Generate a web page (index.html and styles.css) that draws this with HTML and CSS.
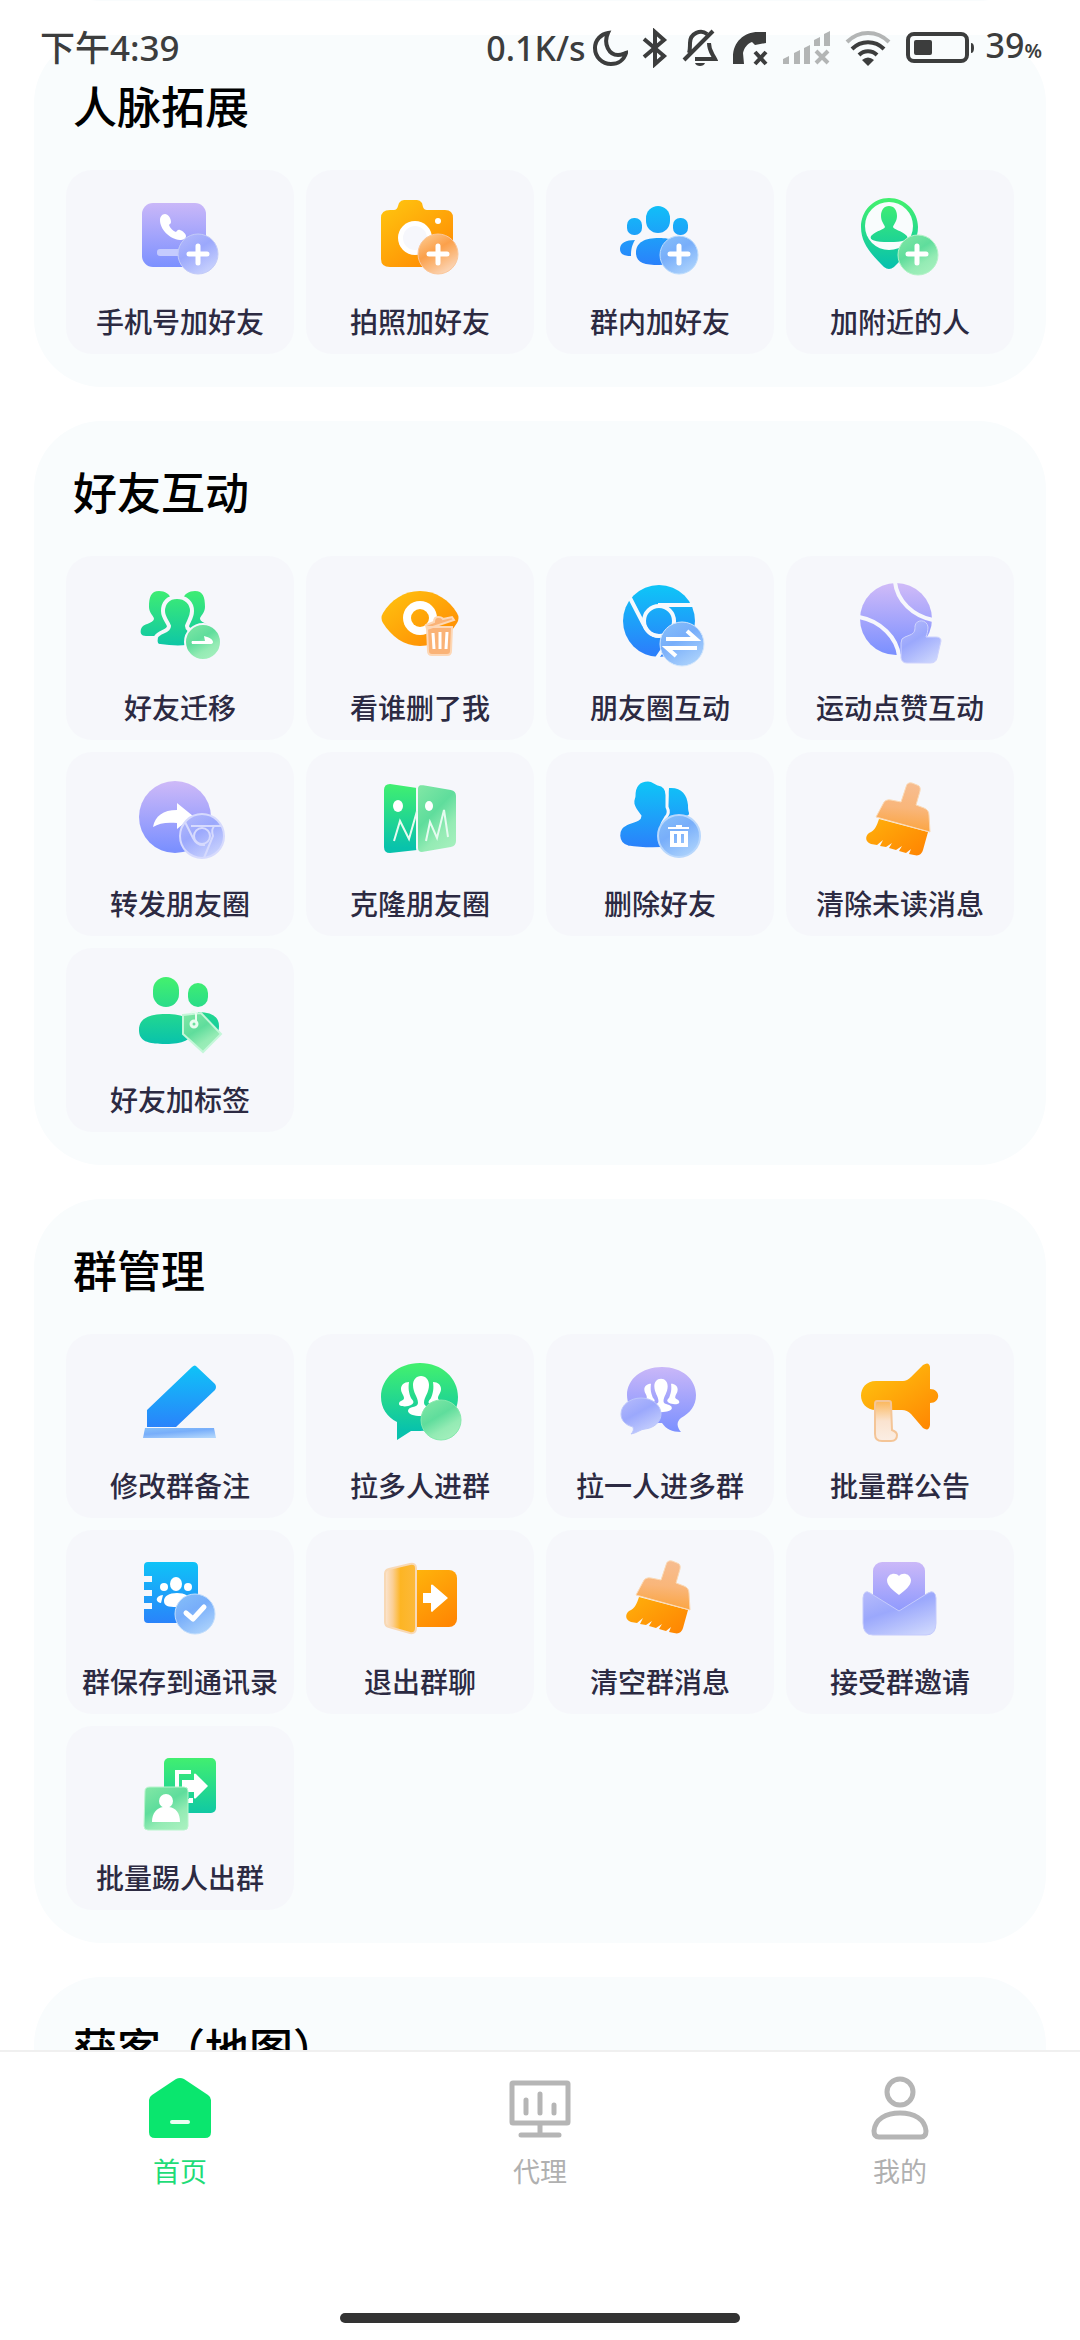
FILE: index.html
```
<!DOCTYPE html>
<html lang="zh-CN">

<head>
    <meta charset="UTF-8">
    <meta name="viewport" content="width=device-width,initial-scale=1.0">
    <title>首页</title>
    <link rel="stylesheet" href="styles.css">
</head>

<body>
    <!-- 公用渐变和图形 -->
    <svg class="defs" width="0" height="0" aria-hidden="true">
        <defs>
            <linearGradient id="purple" gradientUnits="userSpaceOnUse" x1="48" y1="12" x2="48" y2="80">
                <stop offset="0" stop-color="#cdb9f8" />
                <stop offset="1" stop-color="#7b90ff" />
            </linearGradient>
            <linearGradient id="orange" gradientUnits="userSpaceOnUse" x1="20" y1="12" x2="72" y2="84">
                <stop offset="0" stop-color="#ffc30f" />
                <stop offset="1" stop-color="#ff8502" />
            </linearGradient>
            <linearGradient id="blue" gradientUnits="userSpaceOnUse" x1="48" y1="14" x2="48" y2="78">
                <stop offset="0" stop-color="#0fc3f7" />
                <stop offset="1" stop-color="#2b80fb" />
            </linearGradient>
            <linearGradient id="green" gradientUnits="userSpaceOnUse" x1="48" y1="14" x2="48" y2="78">
                <stop offset="0" stop-color="#41ef70" />
                <stop offset="1" stop-color="#08c2ac" />
            </linearGradient>
            <linearGradient id="glassPurple" x1="0.2" y1="0" x2="0.8" y2="1">
                <stop offset="0" stop-color="#b2b8fb" />
                <stop offset="0.4" stop-color="#9ba8fc" />
                <stop offset="1" stop-color="#cdd6fd" />
            </linearGradient>
            <linearGradient id="glassOrange" x1="0.2" y1="0" x2="0.8" y2="1">
                <stop offset="0" stop-color="#fdc88c" />
                <stop offset="0.4" stop-color="#fba04a" />
                <stop offset="1" stop-color="#fbdcc4" />
            </linearGradient>
            <linearGradient id="glassBlue" x1="0.2" y1="0" x2="0.8" y2="1">
                <stop offset="0" stop-color="#84bdf9" />
                <stop offset="0.4" stop-color="#78aefa" />
                <stop offset="1" stop-color="#b0d5fc" />
            </linearGradient>
            <linearGradient id="glassGreen" x1="0.2" y1="0" x2="0.8" y2="1">
                <stop offset="0" stop-color="#7de6a4" />
                <stop offset="0.4" stop-color="#5fdd9c" />
                <stop offset="0.7" stop-color="#94ebb4" />
                <stop offset="1" stop-color="#a6f0be" />
            </linearGradient>
            <linearGradient id="brushHead" x1="0.5" y1="0" x2="0.4" y2="1">
                <stop offset="0" stop-color="#f7bd90" />
                <stop offset="0.5" stop-color="#f9b67a" />
                <stop offset="1" stop-color="#fba33c" />
            </linearGradient>
            <linearGradient id="handle" x1="0" y1="0" x2="0" y2="1">
                <stop offset="0" stop-color="#fbb75a" />
                <stop offset="0.5" stop-color="#fae3cf" />
                <stop offset="1" stop-color="#fbeee4" />
            </linearGradient>
            <linearGradient id="door" x1="0" y1="0" x2="1" y2="0">
                <stop offset="0" stop-color="#fbe6d3" />
                <stop offset="0.25" stop-color="#fbcf94" />
                <stop offset="0.5" stop-color="#fdb524" />
                <stop offset="1" stop-color="#fcb93b" />
            </linearGradient>
        </defs>
        <symbol id="brush" viewBox="0 0 96 96">
            <path fill="url(#orange)" d="M27 49L76 62L71 80Q69 87 62 85L57 84L59 79L54 83L47 81L50 76L44 80L37 78L40 73L34 77L28 76L31 70L25 75L19 74C13 72 13 66 17 63C23 61 25 55 27 49Z" />
            <path fill="url(#brushHead)" stroke="#fbd9b4" d="M54 17Q55 12 60 13L65 15Q69 16 68 21L64 35L72 38Q77 40 77 45L78 62L24 47L31 34Q33 29 39 30L49 32Z" />
        </symbol>
        <symbol id="crowd" viewBox="0 0 48 42">
            <path d="M12 7C7 7 4 10 4 14c0 4 3 6 3 9 0 3-5 2-5 6 0 3 9 3 12 1 5-3 1-5 0-7-2-5-3-9-2-16zM36 7c5 0 8 3 8 7 0 4-3 6-3 9 0 3 5 2 5 6 0 3-9 3-12 1-5-3-1-5 0-7 2-5 3-9 2-16z" />
            <path d="M24 1c5 0 8 4 8 9 0 8-5 12-5 18 0 5 10 3 10 8 0 3-6 5-13 5s-13-2-13-5c0-5 10-3 10-8 0-6-5-10-5-18 0-5 3-9 8-9z" />
        </symbol>
    </svg>

    <!-- 状态栏 -->
    <header class="status-bar">
        <span class="time">下午4:39</span>
        <div class="status-right">
            <span>0.1K/s</span>
            <svg class="moon" width="36" height="38" viewBox="0 0 36 38" aria-hidden="true">
                <path d="M16 4C9 5 3 11 3 19c0 9 7 16 16 16 7 0 13-4 15-11-3 1-5 2-8 2-9 0-15-11-10-22z" />
            </svg>
            <svg width="26" height="40" viewBox="0 0 26 40" aria-hidden="true">
                <path d="M2 11l20 17-9 8V4l9 8L2 29" />
            </svg>
            <svg width="36" height="40" viewBox="0 0 36 40" aria-hidden="true">
                <path d="M2 32L31 3M7 25c1-3 1-6 1-10C8 5 19 1 25 6M27 15c0 8 3 10 6 16H13" />
                <path class="solid" d="M13 35h10c-1 4-9 4-10 0z" />
            </svg>
            <svg width="36" height="36" viewBox="0 0 36 36" aria-hidden="true">
                <path class="solid" d="M1 34V27C1 12 12 2 26 2H34V13L23 15 20 12C15 14 12 18 11 23L12 34Z" />
                <path d="M23 22l11 12M34 22L23 34" />
            </svg>
            <svg width="48" height="36" viewBox="0 0 48 36" aria-hidden="true">
                <path class="faint" d="M1 29l6-3v8H1zM12 23l6-3v14h-6zM22 18l6-3v19h-6zM32 10l6-3v9h-6zM42 4l6-3v15h-6z" />
                <path class="faint-line" d="M34 21l12 12M46 21L34 33" />
            </svg>
            <svg width="48" height="38" viewBox="0 0 48 38" aria-hidden="true">
                <path class="faint-line" d="M3 13C15 1 33 1 45 13" />
                <path d="M8 20c9-9 23-9 32 0M15 26c5-5 13-5 18 0" />
                <path class="solid" d="M18 31q6-5 12 0l-6 6z" />
            </svg>
            <svg class="battery" width="70" height="32" viewBox="0 0 70 32" aria-hidden="true">
                <rect x="2" y="2" width="59" height="27" rx="6" />
                <path class="solid" d="M8 10q0-2 2-2h14q2 0 2 2v11q0 2-2 2H10q-2 0-2-2zM65 11q3 0 3 5t-3 5z" />
            </svg>
            <span>39<small>%</small></span>
        </div>
    </header>

    <main class="content">
        <section class="card card-above"></section>

        <section class="card">
            <h2>人脉拓展</h2>
            <div class="grid">
                <button class="cell">
                    <svg viewBox="0 0 96 96" aria-hidden="true">
                        <rect x="10" y="15" width="64" height="64" rx="11" fill="url(#purple)" />
                        <path fill="#fff" d="M33 26c3 0 6 4 6 8 0 2-2 2-2 3 1 3 4 6 7 7 1-1 2-3 4-2 3 1 6 4 6 6 0 3-3 4-6 4C37 51 28 41 28 32c0-3 2-6 5-6z" />
                        <rect x="25" y="61" width="34" height="7" rx="3" fill="#c5cbfe" />
                        <circle cx="66" cy="66" r="20" fill="url(#glassPurple)" stroke="#c3cbf8" />
                        <path class="plus" d="M66 58v17M57 66h18" />
                    </svg>
                    <span>手机号加好友</span>
                </button>
                <button class="cell">
                    <svg viewBox="0 0 96 96" aria-hidden="true">
                        <path fill="url(#orange)" d="M18 22h4q3 0 4-4l1-3q2-3 5-3h13q3 0 5 3l1 4q1 3 4 3h18q8 0 8 8v41q0 8-8 8H18q-9 0-9-8V30q0-8 9-8z" />
                        <circle cx="43" cy="50" r="17" fill="#fff" />
                        <circle cx="43" cy="50" r="12" fill="#f6f7fc" />
                        <circle cx="66" cy="33" r="3" fill="#fff" />
                        <circle cx="66" cy="66" r="20" fill="url(#glassOrange)" stroke="#fbc79a" />
                        <path class="plus" d="M66 58v17M57 66h18" />
                    </svg>
                    <span>拍照加好友</span>
                </button>
                <button class="cell">
                    <svg viewBox="0 0 96 96" aria-hidden="true">
                        <g fill="url(#blue)">
                            <rect x="34" y="18" width="24" height="27" rx="12" />
                            <rect x="15" y="30" width="15" height="17" rx="7" />
                            <rect x="61" y="30" width="15" height="17" rx="7" />
                            <path d="M23 52C14 52 8 55 8 61c0 5 4 7 11 7 0-7 1-11 4-16zM47 50c12 0 22 3 22 13s-10 14-22 14c-14 0-23-2-23-12 0-11 9-15 23-15z" />
                        </g>
                        <circle cx="67" cy="67" r="19" fill="url(#glassBlue)" stroke="#bcdcfd" />
                        <path class="plus" d="M67 58v17M58 66h18" />
                    </svg>
                    <span>群内加好友</span>
                </button>
                <button class="cell">
                    <svg viewBox="0 0 96 96" aria-hidden="true">
                        <path fill="url(#green)" d="M37 10C53 10 66 23 66 39C66 56 54 67 42 79Q37 83 32 79C20 67 9 56 9 39C9 23 21 10 37 10Z" />
                        <circle cx="37" cy="38" r="24" fill="#f9fcfd" />
                        <path fill="url(#green)" d="M37 18c5 0 8 4 8 10 0 5-3 8-4 11 1 3 8 3 14 9q3 6-18 6t-18-6c6-6 13-6 14-9-1-3-4-6-4-11 0-6 3-10 8-10z" />
                        <circle cx="66" cy="67" r="20" fill="url(#glassGreen)" stroke="#b4f3c8" />
                        <path class="plus" d="M65 58v17M56 66h18" />
                    </svg>
                    <span>加附近的人</span>
                </button>
            </div>
        </section>

        <section class="card">
            <h2>好友互动</h2>
            <div class="grid">
                <button class="cell">
                    <svg viewBox="0 0 96 96" aria-hidden="true">
                        <path fill="url(#green)" d="M27 17c6 0 11 3 12 8v37H14c-5 0-6-3-5-7 2-6 12-5 13-10 0-3-5-6-5-12 0-10 2-16 10-16zM63 17c-6 0-11 3-12 8v37h25c5 0 6-3 5-7-2-6-12-5-13-10 0-3 5-6 5-12 0-10-2-16-10-16z" />
                        <path fill="url(#green)" stroke="#f6f7fc" stroke-width="4" d="M45 23c9 0 15 6 15 14 0 7-4 11-5 15 0 6 11 5 14 11 2 6-1 9-5 9-12 2-24 2-36 0-4 0-5-4-4-9 3-6 13-5 13-11-1-4-6-8-6-15 0-8 5-14 14-14z" />
                        <circle cx="71" cy="68" r="18" fill="url(#glassGreen)" stroke="#f6f7fc" stroke-width="2" />
                        <path fill="#fff" d="M60 67h13l-1-5c4 1 9 3 9 6q0 2-3 2H60q-1-2 0-3z" />
                    </svg>
                    <span>好友迁移</span>
                </button>
                <button class="cell">
                    <svg viewBox="0 0 96 96" aria-hidden="true">
                        <path fill="url(#orange)" d="M11 39C19 26 32 17 48 17s29 9 37 22q3 5 0 10C77 62 64 72 48 72S19 62 11 49q-3-5 0-10z" />
                        <circle cx="48" cy="44" r="17" fill="#fff" />
                        <circle cx="48" cy="44" r="9" fill="url(#orange)" />
                        <path fill="#fab377" stroke="#fdd7b5" stroke-width="2" d="M55 53h25l-1 24q0 4-4 4H60q-4 0-4-4zM54 51l8-3q0-5 4-5t5 2l9-2 2 3-27 9z" />
                        <path stroke="#fff" stroke-width="3" d="M61 59l1 16M68 58v17M75 58l-1 17" />
                    </svg>
                    <span>看谁删了我</span>
                </button>
                <button class="cell">
                    <svg viewBox="0 0 96 96" aria-hidden="true">
                        <circle cx="47" cy="47" r="36" fill="url(#blue)" />
                        <g fill="none" stroke="#f6f9fd" stroke-width="4">
                            <circle cx="47" cy="47" r="15" />
                            <path d="M82 31H46M18 24l14 27q5 11 15 11M62 46v13L45 84" />
                        </g>
                        <circle cx="70" cy="70" r="22" fill="url(#glassBlue)" stroke="#d2e6fc" />
                        <path fill="none" stroke="#fff" stroke-width="4" d="M54 65h30l-9-8M85 74H55l9 8" />
                    </svg>
                    <span>朋友圈互动</span>
                </button>
                <button class="cell">
                    <svg viewBox="0 0 96 96" aria-hidden="true">
                        <circle cx="44" cy="45" r="36" fill="url(#purple)" />
                        <path fill="none" stroke="#f6f7fc" stroke-width="4" d="M43 8C45 27 61 42 81 46M7 43C29 47 45 64 47 82" />
                        <path fill="url(#glassPurple)" stroke="#cfd3fd" d="M49 69q0-5 4-6l5-2c5-2 5-5 5-9 1-7 12-7 13 1 0 4-1 7-2 10h10q5 0 5 4l-4 17q-1 5-7 5H55q-5 0-6-5z" />
                    </svg>
                    <span>运动点赞互动</span>
                </button>
                <button class="cell">
                    <svg viewBox="0 0 96 96" aria-hidden="true">
                        <circle cx="43" cy="47" r="36" fill="url(#purple)" />
                        <path fill="#fff" d="M21 57C23 46 31 40 45 40V33L61 46L45 59V53C35 52 27 53 21 57Z" />
                        <circle cx="70" cy="66" r="22" fill="url(#glassPurple)" stroke="#d6dafd" stroke-width="2" />
                        <g fill="none" stroke="#d6dafd" stroke-width="2">
                            <circle cx="70" cy="66" r="8" />
                            <path d="M53 52l8 16q4 8 12 7M59 56h30M82 57q-3 2-1 9l-9 22" />
                        </g>
                    </svg>
                    <span>转发朋友圈</span>
                </button>
                <button class="cell">
                    <svg viewBox="0 0 96 96" aria-hidden="true">
                        <path fill="url(#green)" d="M18 14l27 4v62l-27 3q-6 0-6-6V20q0-6 6-6z" />
                        <path fill="url(#glassGreen)" stroke="#f6f7fc" stroke-width="2" d="M50 14l29 5q6 1 6 7v45q0 6-6 7l-29 5q-5 0-5-5V19q0-5 5-5z" />
                        <ellipse cx="26" cy="36" rx="5" ry="6" fill="#fff" />
                        <ellipse cx="57" cy="36" rx="4" ry="5" fill="#fff" />
                        <path fill="none" stroke="#e6fbf0" stroke-width="2" d="M22 71l6-20 9 18 8-28M54 71l4-19 7 16 7-28 4 27" />
                    </svg>
                    <span>克隆朋友圈</span>
                </button>
                <button class="cell">
                    <svg viewBox="0 0 96 96" aria-hidden="true">
                        <g fill="url(#blue)">
                            <path d="M57 18c12-1 18 6 19 17 0 3 0 5 1 8 1 4-8 3-12 5-3 2-5 4-10 4z" />
                            <path stroke="#f6f7fc" stroke-width="3" d="M36 10c5 0 7 3 10 4 6 1 9 5 9 11v12c2 4 2 7-1 10-2 4-5 7-4 9l10 5v17q-26 2-44-1C4 74 4 58 14 54c5-3 14-3 14-8-2-3-6-7-7-12-1-4 1-6 1-8 0-10 4-16 14-16z" />
                        </g>
                        <circle cx="67" cy="66" r="21" fill="url(#glassBlue)" stroke="#b8d7fc" stroke-width="2" />
                        <path fill="#fff" fill-rule="evenodd" d="M56 57h8v-2h6v2h7v2H56zM58 61h18v16H58zM62 64v9h3v-9zM69 64v9h3v-9z" />
                    </svg>
                    <span>删除好友</span>
                </button>
                <button class="cell">
                    <svg viewBox="0 0 96 96" aria-hidden="true">
                        <use href="#brush" />
                    </svg>
                    <span>清除未读消息</span>
                </button>
                <button class="cell">
                    <svg viewBox="0 0 96 96" aria-hidden="true">
                        <g fill="url(#green)">
                            <rect x="21" y="11" width="26" height="30" rx="13" />
                            <rect x="56" y="17" width="20" height="24" rx="10" />
                            <path d="M66 46q21 0 21 14c0 8-3 11-15 10zM34 48c16 0 27 4 27 15S50 78 34 78C15 78 7 75 7 64s9-16 27-16z" />
                        </g>
                        <path fill="url(#glassGreen)" stroke="#c4f7d9" stroke-width="2" d="M51 49l18-2 20 21-18 18-20-18z" />
                        <circle cx="62" cy="58" r="3" fill="none" stroke="#e8fdf0" stroke-width="3" />
                        <path fill="none" stroke="#e8fdf0" stroke-width="2" d="M64 56v-8q-2-5-5-1" />
                    </svg>
                    <span>好友加标签</span>
                </button>
            </div>
        </section>

        <section class="card">
            <h2>群管理</h2>
            <div class="grid">
                <button class="cell">
                    <svg viewBox="0 0 96 96" aria-hidden="true">
                        <path fill="url(#blue)" d="M60 15q3-3 5 0l18 17q2 3 0 6L44 75H15V58z" />
                        <path fill="url(#glassBlue)" d="M13 76h69l2 10H11z" />
                    </svg>
                    <span>修改群备注</span>
                </button>
                <button class="cell">
                    <svg viewBox="0 0 96 96" aria-hidden="true">
                        <path fill="url(#green)" d="M48 11c22 0 38 15 38 34S70 79 48 79h-9L25 88V70C15 65 9 56 9 45 9 26 26 11 48 11z" />
                        <use href="#crowd" x="25" y="23" width="48" height="42" fill="#fff" />
                        <circle cx="69" cy="68" r="20" fill="url(#glassGreen)" stroke="#86e9ad" />
                    </svg>
                    <span>拉多人进群</span>
                </button>
                <button class="cell">
                    <svg viewBox="0 0 96 96" aria-hidden="true">
                        <path fill="url(#purple)" d="M50 15c20 0 34 12 34 28 0 11-6 18-15 23-5 4-4 9 0 14-9 0-15-3-19-9-20 1-35-12-35-28s15-28 35-28z" />
                        <use href="#crowd" x="29" y="26" width="40" height="35" fill="#fff" />
                        <path fill="url(#glassPurple)" stroke="#bcc7fb" d="M29 46c11 0 20 7 20 16 0 8-7 14-16 15-4 0-8 4-14 5 2-2 3-4 2-7C13 73 9 68 9 62c0-9 9-16 20-16z" />
                    </svg>
                    <span>拉一人进多群</span>
                </button>
                <button class="cell">
                    <svg viewBox="0 0 96 96" aria-hidden="true">
                        <path fill="url(#orange)" d="M24 29h27q4 0 8-4l12-12q6-4 7 2v22c11 0 11 14 0 14v22q-1 7-7 3L59 62q-4-4-9-4H24C4 58 4 29 24 29z" />
                        <path fill="url(#handle)" stroke="#f4c597" stroke-width="2" d="M25 49h12q2 0 2 2l1 27q5 2 5 5 0 6-6 6H30q-7 0-7-7V52q0-3 2-3z" />
                    </svg>
                    <span>批量群公告</span>
                </button>
                <button class="cell">
                    <svg viewBox="0 0 96 96" aria-hidden="true">
                        <path fill="url(#blue)" d="M16 14h45q5 0 5 5v56H16q-4 0-4-4V61h8v-6h-8v-7h8v-6h-8v-8h8v-6h-8V18q0-4 4-4z" />
                        <g fill="#fff">
                            <ellipse cx="44" cy="36" rx="6" ry="7" />
                            <circle cx="32" cy="39" r="4" />
                            <circle cx="56" cy="39" r="4" />
                            <path d="M31 47c-8 1-8 7-2 8zM45 45c8 0 13 3 13 8s-4 6-13 6-13-1-13-6 5-8 13-8z" />
                        </g>
                        <circle cx="63" cy="66" r="20" fill="url(#glassBlue)" stroke="#c3defc" />
                        <path fill="none" stroke="#fff" stroke-width="5" stroke-linecap="round" stroke-linejoin="round" d="M54 65l7 6 11-12" />
                    </svg>
                    <span>群保存到通讯录</span>
                </button>
                <button class="cell">
                    <svg viewBox="0 0 96 96" aria-hidden="true">
                        <rect x="36" y="22" width="49" height="57" rx="8" fill="url(#orange)" />
                        <path fill="url(#door)" stroke="#f8d9b6" stroke-width="2" d="M17 21l21-5q6-1 6 4v60q0 6-6 5l-21-6q-4-1-4-5V26q0-4 4-5z" />
                        <path fill="#fff" d="M51 45h8v-8q1-1 2 0l15 13-15 13q-1 2-2 0v-8h-8z" />
                    </svg>
                    <span>退出群聊</span>
                </button>
                <button class="cell">
                    <svg viewBox="0 0 96 96" aria-hidden="true">
                        <use href="#brush" />
                    </svg>
                    <span>清空群消息</span>
                </button>
                <button class="cell">
                    <svg viewBox="0 0 96 96" aria-hidden="true">
                        <rect x="21" y="14" width="52" height="60" rx="9" fill="url(#purple)" />
                        <path fill="#fff" d="M47 28c3-4 11-3 12 4 0 6-6 10-12 15-6-5-12-9-12-15 1-7 9-8 12-4z" />
                        <path fill="url(#glassPurple)" stroke="#c5cbfc" d="M18 45l29 18 29-18q7-4 8 5v25q0 12-10 12H21q-10 0-10-12V50q1-9 7-5z" />
                    </svg>
                    <span>接受群邀请</span>
                </button>
                <button class="cell">
                    <svg viewBox="0 0 96 96" aria-hidden="true">
                        <rect x="32" y="14" width="52" height="55" rx="5" fill="url(#green)" />
                        <path fill="none" stroke="#fff" stroke-width="4" d="M59 28H45v20M59 54v3h-8" />
                        <path fill="#fff" d="M50 36h12v-6q1-1 2 0l12 12-12 12q-1 1-2 0v-6H50z" />
                        <path fill="url(#glassGreen)" stroke="#b8f5cd" d="M18 43h34q4 0 4 4v35q0 4-4 4H16q-4 0-4-4l1-35q0-4 5-4z" />
                        <circle cx="34" cy="57" r="7" fill="#fff" />
                        <path fill="#fff" d="M20 78c0-9 5-14 11-15v-4h6v4c7 1 11 6 11 15z" />
                    </svg>
                    <span>批量踢人出群</span>
                </button>
            </div>
        </section>

        <section class="card">
            <h2>获客（地图）</h2>
            <div class="grid"></div>
        </section>
    </main>

    <!-- 底部导航 -->
    <footer class="footer">
        <nav class="tabs">
            <a class="tab active" href="#">
                <svg viewBox="0 0 64 64" aria-hidden="true">
                    <path fill="#0ae66e" d="M28 3q4-2 8 0l24 16q3 2 3 5v32q0 6-6 6H7q-6 0-6-6V24q0-3 3-5z" />
                    <path stroke="#e8fff1" stroke-width="4" stroke-linecap="round" d="M24 46h16" />
                </svg>
                <span>首页</span>
            </a>
            <a class="tab" href="#">
                <svg viewBox="0 0 64 64" aria-hidden="true">
                    <path d="M5 7h54q1 0 1 1v38q0 1-1 1H5q-1 0-1-1V8q0-1 1-1zM32 47v11" />
                    <path stroke-linecap="round" d="M13 59h38M18 24v13M32 18v19M46 29v8" />
                </svg>
                <span>代理</span>
            </a>
            <a class="tab" href="#">
                <svg viewBox="0 0 64 64" aria-hidden="true">
                    <circle cx="32" cy="16" r="13" />
                    <path d="M11 61q-5 0-5-6c1-12 12-18 26-18s25 6 26 18q0 6-5 6z" />
                </svg>
                <span>我的</span>
            </a>
        </nav>
        <div class="home-bar"></div>
    </footer>
</body>

</html>
```
FILE: styles.css
```
* {
    margin: 0;
    padding: 0;
    box-sizing: border-box;
}

html,
body {
    height: 100%;
    font-family: "Noto Sans", "Noto Sans CJK SC", sans-serif;
    background-color: #fff;
}

/* 内容区在上，导航固定在底部 */
body {
    display: flex;
    flex-direction: column;
    overflow: hidden;
}

.defs {
    position: absolute;
}

/* 状态栏浮在内容上方 */
.status-bar {
    position: absolute;
    top: 0;
    left: 0;
    right: 0;
    z-index: 1;
    display: flex;
    justify-content: space-between;
    align-items: center;
    height: 96px;
    padding: 0 38px 0 40px;
    color: #3c3d3d;
    font-size: 34px;
    font-weight: 500;
    line-height: 48px;
}

.time {
    font-size: 35px;
}

.status-right {
    display: flex;
    align-items: center;
    gap: 14px;
}

.status-right small {
    font-size: 20px;
    font-weight: 600;
}

.status-right svg {
    fill: none;
    stroke: #3c3d3d;
    stroke-width: 4;
}

.status-right .moon {
    margin-left: -8px;
}

.status-right .battery {
    margin-right: -4px;
}

.status-right .solid {
    fill: #3c3d3d;
    stroke: none;
}

.status-right .faint {
    fill: #b3b5b5;
    stroke: none;
}

.status-right .faint-line {
    stroke: #b3b5b5;
}

/* 内容区 */
.content {
    flex: 1;
    min-height: 0;
    overflow: hidden;
    padding: 0 34px;
}

.card {
    margin-bottom: 34px;
    padding: 36px 32px 33px;
    border-radius: 68px;
    background-color: #f9fcfd;
}

/* 已滚出屏幕的卡片 */
.card-above {
    height: 180px;
    margin-top: -179px;
}

.card h2 {
    margin-bottom: 27px;
    padding-left: 7px;
    font-size: 44px;
    font-weight: 500;
    line-height: 72px;
    color: #000;
}

.grid {
    display: grid;
    grid-template-columns: repeat(4, 1fr);
    gap: 12px;
}

.cell {
    display: flex;
    flex-direction: column;
    align-items: center;
    gap: 18px;
    padding: 18px 0 12px;
    border: none;
    border-radius: 26px;
    background-color: #f6f7fb;
    color: #2c2a42;
    font-family: inherit;
    font-size: 28px;
    font-weight: 500;
    line-height: 40px;
    cursor: pointer;
}

.cell svg {
    width: 96px;
    height: 96px;
}

.cell .plus {
    fill: none;
    stroke: #fff;
    stroke-width: 5;
    stroke-linecap: round;
}

/* 底部导航 */
.footer {
    height: 290px;
    border-top: 2px solid #f0f0f0;
    background-color: #fff;
    display: flex;
    flex-direction: column;
    justify-content: space-between;
    align-items: center;
    padding: 24px 0 17px;
}

.tabs {
    display: flex;
    width: 100%;
}

.tab {
    flex: 1;
    display: flex;
    flex-direction: column;
    align-items: center;
    gap: 12px;
    color: #b0b0b0;
    font-size: 27px;
    line-height: 40px;
    text-decoration: none;
}

.tab svg {
    width: 64px;
    height: 64px;
    fill: none;
    stroke: #b5b5b5;
    stroke-width: 5;
}

.tab.active {
    color: #1fdc78;
}

.tab.active svg {
    stroke: none;
}

.home-bar {
    width: 400px;
    height: 10px;
    border-radius: 5px;
    background-color: #333;
}
```
